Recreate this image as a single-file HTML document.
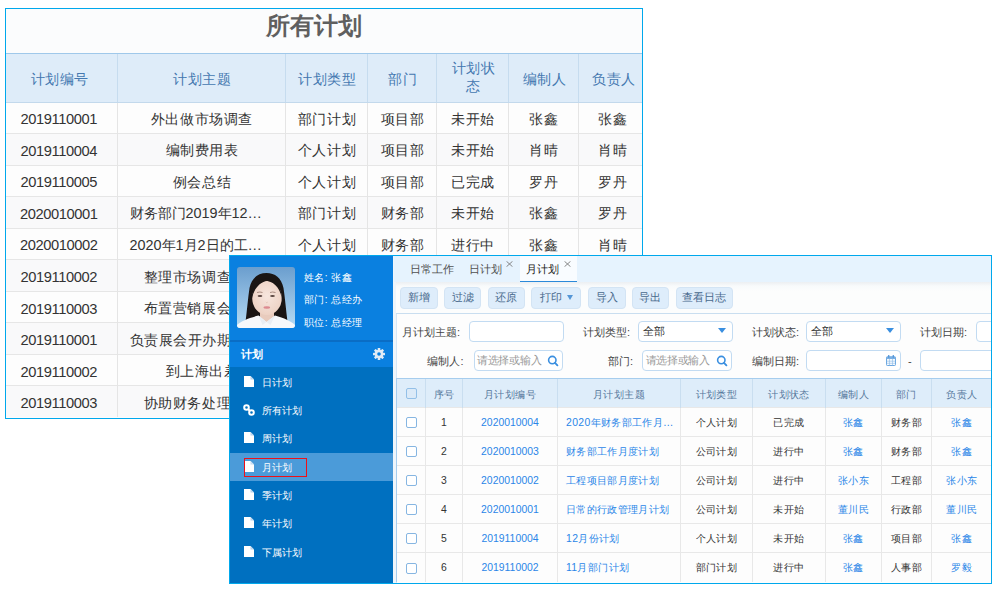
<!DOCTYPE html>
<html><head><meta charset="utf-8">
<style>
*{box-sizing:border-box;margin:0;padding:0}
html,body{width:1000px;height:600px;overflow:hidden;background:#fff;font-family:"Liberation Sans",sans-serif}
.abs{position:absolute}
/* back table */
#back{position:absolute;left:5px;top:8px;width:638px;height:411px;border:1px solid #00a8ec;background:#fbfcfd;overflow:hidden}
#back .title{position:absolute;left:0;top:0;width:616px;height:44px;line-height:34px;text-align:center;font-size:24.4px;font-weight:bold;color:#5f5f5f}
#back table{position:absolute;left:0;top:44px;width:636px;border-collapse:collapse;table-layout:fixed}
#back td,#back th{font-size:14.4px;text-align:center;white-space:nowrap;overflow:hidden;text-overflow:ellipsis;padding:0 11px;color:#333;font-weight:normal;border-left:1px solid #e5e5e5;border-top:1px solid #e6e6e6}
#back th{letter-spacing:.6px;background:#deecf9;color:#4478b0;border-left:1px solid #c6dcef;border-top:1px solid #9fc8ea;border-bottom:1px solid #c3d9ec;height:48.5px;line-height:16px;padding:2px 3.5px 0 6.5px}
#back th:first-child{padding:2px 7.5px 0 4.5px}
#back th:last-child{padding:2px 1px 0 8.5px}
#back td{height:31.55px;padding:3px 10px 0 12px;letter-spacing:.6px}
#back td:last-child{padding:3px 7px 0 12px}
#back td:first-child{padding:3px 13px 0 8px;letter-spacing:-.4px;font-size:14.7px}
#back tr>*:first-child{border-left:none}
#back tr:nth-child(even) td{background:#fdfdfd}
#back tr:nth-child(odd) td{background:#f9f9fa}

/* front panel */
#front{position:absolute;left:229px;top:255px;width:763px;height:329px;border:1px solid #00a8ec;background:#fdfdfd;overflow:hidden}
#front .a{position:absolute}
.side{left:0;top:0;width:163px;height:327px;background:#0070c0}
.prof{left:0;top:0;width:163px;height:85px;background:#0a80e0}
.pline{left:0;top:84px;width:163px;height:2px;background:#0a6dc5}
.phead{left:0;top:86px;width:163px;height:25px;background:#0a80e0}
.ptxt{color:#fff;font-size:10px;letter-spacing:.4px;line-height:14px;white-space:nowrap}
.mi{left:0;width:163px;height:28.2px;color:#fff;font-size:10px}
.mi .ic{position:absolute;left:14px;top:8px}
.mi span{position:absolute;left:32px;top:7px;line-height:16px}
.tabbar{left:164px;top:0;width:597px;height:26px;background:#e6f3fe}
.tab{top:0;height:26px;line-height:26px;font-size:11px;color:#505050;white-space:nowrap}
.x{font-size:11px;color:#888;line-height:10px}
.tb{left:166px;top:26px;width:595px;height:32px;background:linear-gradient(#eceff2,#f8fafb 4px,#fcfdfd 9px,#fcfdfd);border-bottom:1px solid #c9def0}
.btn{top:31px;height:21.5px;border:1px solid #d3e4f4;border-radius:4px;background:#deedfb;color:#48698c;font-size:10.8px;line-height:19.5px;text-align:center;white-space:nowrap}
.lbl{font-size:11px;color:#444;white-space:nowrap;line-height:14px;text-align:right}
.inp{height:21px;border:1px solid #c2dbf2;border-radius:4px;background:#fff;font-size:11px;color:#333;line-height:19.5px;padding-left:4px;white-space:nowrap;overflow:hidden}
.ph{color:#999;letter-spacing:-.3px}
#ft{position:absolute;left:166px;top:122px;border-collapse:collapse;table-layout:fixed;width:595px}
#ft td,#ft th{font-size:10.4px;letter-spacing:.35px;text-align:center;white-space:nowrap;overflow:hidden;text-overflow:ellipsis;color:#333;font-weight:normal;border-left:1px solid #e8e8e8;border-top:1px solid #e8e8e8;height:29px;padding:1px 5px 0}
#ft th{background:#deedfa;color:#56789c;border-left:1px solid #c9def0;border-top:1px solid #a6cdee;height:29px;padding-top:3px}
#ft th:first-child{padding-top:0}
#ft tr>*:first-child{border-left:1px solid #a6cdee}
#ft .l{color:#2a86e8}
#ft .n{letter-spacing:0}
.cb{display:inline-block;width:11px;height:11px;border:1px solid #86b6e2;border-radius:2px;background:#fff;vertical-align:middle}
</style></head><body>

<div id="back">
  <div class="title">所有计划</div>
  <table>
    <colgroup><col style="width:111px"><col style="width:168px"><col style="width:82px"><col style="width:69px"><col style="width:72px"><col style="width:70px"><col style="width:64px"></colgroup>
    <tr><th>计划编号</th><th>计划主题</th><th>计划类型</th><th>部门</th><th style="line-height:17.6px;padding-top:0">计划状<br>态</th><th>编制人</th><th>负责人</th></tr>
    <tr><td>2019110001</td><td>外出做市场调查</td><td>部门计划</td><td>项目部</td><td>未开始</td><td>张鑫</td><td>张鑫</td></tr>
    <tr><td>2019110004</td><td>编制费用表</td><td>个人计划</td><td>项目部</td><td>未开始</td><td>肖晴</td><td>肖晴</td></tr>
    <tr><td>2019110005</td><td>例会总结</td><td>个人计划</td><td>项目部</td><td>已完成</td><td>罗丹</td><td>罗丹</td></tr>
    <tr><td>2020010001</td><td style="text-align:left;letter-spacing:0;padding:3px 22px 0 12px">财务部门2019年12月份计划</td><td>部门计划</td><td>财务部</td><td>未开始</td><td>张鑫</td><td>罗丹</td></tr>
    <tr><td>2020010002</td><td style="text-align:left;letter-spacing:0;padding:3px 22px 0 12px">2020年1月2日的工作计划</td><td>个人计划</td><td>财务部</td><td>进行中</td><td>张鑫</td><td>肖晴</td></tr>
    <tr><td>2019110002</td><td>整理市场调查报告</td><td>个人计划</td><td>项目部</td><td>进行中</td><td>张鑫</td><td>张鑫</td></tr>
    <tr><td>2019110003</td><td>布置营销展会场地</td><td>部门计划</td><td>项目部</td><td>进行中</td><td>张鑫</td><td>张鑫</td></tr>
    <tr><td>2019110001</td><td>负责展会开办期间事务</td><td>部门计划</td><td>项目部</td><td>进行中</td><td>张鑫</td><td>张鑫</td></tr>
    <tr><td>2019110002</td><td>到上海出差</td><td>个人计划</td><td>项目部</td><td>进行中</td><td>张鑫</td><td>张鑫</td></tr>
    <tr><td>2019110003</td><td>协助财务处理账目</td><td>个人计划</td><td>项目部</td><td>进行中</td><td>张鑫</td><td>张鑫</td></tr>
  </table>
</div>


<div id="front">
  <div class="a side"></div>
  <div class="a prof"></div>
  <div class="a pline"></div>
  <div class="a phead"></div>
  <div class="a" style="left:7px;top:11px;width:58px;height:61px;border-radius:3px;overflow:hidden">
    <svg width="58" height="61" viewBox="0 0 58 61">
      <defs><linearGradient id="bg" x1="0" y1="0" x2="0" y2="1"><stop offset="0" stop-color="#6b9ece"/><stop offset="1" stop-color="#b6dbf4"/></linearGradient>
      <radialGradient id="sk" cx="0.5" cy="0.45" r="0.6"><stop offset="0" stop-color="#f7e6de"/><stop offset="1" stop-color="#ecd0c2"/></radialGradient></defs>
      <rect width="58" height="61" fill="url(#bg)"/>
      <path d="M8.5 55 C10 43 11 31 12.5 21 C14.5 11 21 6 29.5 6 C38 6 44.5 11 46.5 21 C48 31 49 43 50.5 55 Z" fill="#1a1514"/>
      <rect x="23" y="41" width="14" height="15" fill="#e8cbbd"/>
      <ellipse cx="30" cy="31" rx="14.8" ry="17" fill="url(#sk)"/>
      <path d="M14.8 33 C14.5 20 21 12 29.5 11.5 C38.5 12 45.2 20 45 33 C44 23 38.5 15.5 30 13.8 C22 15.5 16 23 14.8 33 Z" fill="#1a1514"/>
      <path d="M0 61 L0 58 C4 54 12 51 21.5 48.5 L29.5 55 L38 48.5 C47 51 54 54 58 58 L58 61 Z" fill="#f6f8fb"/>
      <path d="M21.5 48.5 L29.5 55 L25.5 58 Z M38 48.5 L29.5 55 L33.5 58 Z" fill="#e9eef4"/>
      <ellipse cx="23" cy="29" rx="2.4" ry="1.1" fill="#5a4640"/>
      <ellipse cx="35.5" cy="29" rx="2.4" ry="1.1" fill="#5a4640"/>
      <path d="M20 25.5 Q23 24.5 25.5 25.5 M33 25.5 Q35.5 24.5 38.5 25.5" stroke="#8a6a5e" stroke-width="0.7" fill="none"/>
      <ellipse cx="29.8" cy="40.5" rx="3.3" ry="1.2" fill="#dc8a90"/>
      <path d="M28.8 35 Q29.8 36.5 30.8 35" stroke="#dcb8a8" stroke-width="0.6" fill="none"/>
    </svg>
  </div>
  <div class="a ptxt" style="left:74px;top:14.5px">姓名: 张鑫</div>
  <div class="a ptxt" style="left:74px;top:37px">部门: 总经办</div>
  <div class="a ptxt" style="left:74px;top:59.5px">职位: 总经理</div>
  <div class="a" style="left:10.5px;top:91px;color:#fff;font-weight:bold;font-size:11px;line-height:14px">计划</div>
  <svg class="a" style="left:142.5px;top:92px" width="12" height="12" viewBox="0 0 12 12"><g fill="#e2ecf6"><circle cx="6" cy="6" r="4.3"/><g id="t"><rect x="4.7" y="0" width="2.6" height="12" rx="0.6"/></g><rect x="4.7" y="0" width="2.6" height="12" rx="0.6" transform="rotate(45 6 6)"/><rect x="4.7" y="0" width="2.6" height="12" rx="0.6" transform="rotate(90 6 6)"/><rect x="4.7" y="0" width="2.6" height="12" rx="0.6" transform="rotate(135 6 6)"/></g><circle cx="6" cy="6" r="1.8" fill="#0a80e0"/></svg>
  <div class="a mi" style="top:112px"><svg class="ic" width="10" height="11" viewBox="0 0 10 11"><path d="M0 0H6.5L10 3.5V11H0Z" fill="#fff"/><path d="M6.5 0V3.5H10" fill="#b8d4ee"/></svg><span>日计划</span></div>
  <div class="a mi" style="top:140.2px"><svg class="ic" width="12" height="12" viewBox="0 0 12 12" style="left:13px;top:8px"><g fill="none" stroke="#fff" stroke-width="2"><circle cx="3.5" cy="3.5" r="2.3"/><circle cx="8.5" cy="8.5" r="2.3"/><path d="M5 5L7 7"/></g></svg><span>所有计划</span></div>
  <div class="a mi" style="top:168.4px"><svg class="ic" width="10" height="11" viewBox="0 0 10 11"><path d="M0 0H6.5L10 3.5V11H0Z" fill="#fff"/><path d="M6.5 0V3.5H10" fill="#b8d4ee"/></svg><span>周计划</span></div>
  <div class="a mi" style="top:196.8px;height:28px;background:#4b9bd9"><svg class="ic" width="10" height="11" viewBox="0 0 10 11"><path d="M0 0H6.5L10 3.5V11H0Z" fill="#fff"/><path d="M6.5 0V3.5H10" fill="#c8def2"/></svg><span>月计划</span></div>
  <div class="a" style="left:14px;top:202px;width:63px;height:19px;border:1.6px solid #ee1018"></div>
  <div class="a mi" style="top:225.2px"><svg class="ic" width="10" height="11" viewBox="0 0 10 11"><path d="M0 0H6.5L10 3.5V11H0Z" fill="#fff"/><path d="M6.5 0V3.5H10" fill="#b8d4ee"/></svg><span>季计划</span></div>
  <div class="a mi" style="top:253.4px"><svg class="ic" width="10" height="11" viewBox="0 0 10 11"><path d="M0 0H6.5L10 3.5V11H0Z" fill="#fff"/><path d="M6.5 0V3.5H10" fill="#b8d4ee"/></svg><span>年计划</span></div>
  <div class="a mi" style="top:281.6px"><svg class="ic" width="10" height="11" viewBox="0 0 10 11"><path d="M0 0H6.5L10 3.5V11H0Z" fill="#fff"/><path d="M6.5 0V3.5H10" fill="#b8d4ee"/></svg><span>下属计划</span></div>

  <div class="a" style="left:163px;top:0;width:3px;height:327px;background:#eef5fb"></div>
  <div class="a" style="left:166px;top:58px;width:1px;height:269px;background:#d6e7f6"></div>
  <div class="a tabbar"></div>
  <div class="a" style="left:290px;top:0;width:56.5px;height:26.5px;background:#f9fcff;border-bottom:2px solid #2b89d9"></div>
  <div class="a tab" style="left:180px">日常工作</div>
  <div class="a tab" style="left:238.5px">日计划</div>
  <div class="a x" style="left:276px;top:4.5px"><svg width="7" height="6" viewBox="0 0 7 6" style="display:block"><path d="M0.5 0.3L6.5 5.7M6.5 0.3L0.5 5.7" stroke="#7a7a7a" stroke-width="0.9"/></svg></div>
  <div class="a tab" style="left:296px;color:#222">月计划</div>
  <div class="a x" style="left:333.5px;top:4.5px"><svg width="7" height="6" viewBox="0 0 7 6" style="display:block"><path d="M0.5 0.3L6.5 5.7M6.5 0.3L0.5 5.7" stroke="#7a7a7a" stroke-width="0.9"/></svg></div>

  <div class="a tb"></div>
  <div class="a btn" style="left:169.5px;width:38px">新增</div>
  <div class="a btn" style="left:214px;width:37px">过滤</div>
  <div class="a btn" style="left:257.5px;width:37px">还原</div>
  <div class="a btn" style="left:301px;width:49.5px;text-align:left;padding-left:7.5px">打印<span style="display:inline-block;width:0;height:0;border-left:3.7px solid transparent;border-right:3.7px solid transparent;border-top:5px solid #5596d6;vertical-align:1.5px;margin-left:5.5px"></span></div>
  <div class="a btn" style="left:357.5px;width:38px">导入</div>
  <div class="a btn" style="left:401.5px;width:37.5px">导出</div>
  <div class="a btn" style="left:445.5px;width:57.5px">查看日志</div>

  <div class="a lbl" style="left:150px;width:80px;top:69px">月计划主题:</div>
  <div class="a inp" style="left:239px;top:64.5px;width:95px"></div>
  <div class="a lbl" style="left:153.5px;width:80px;top:98px">编制人:</div>
  <div class="a inp ph" style="left:243.5px;top:94px;width:89.5px;padding-left:2.5px">请选择或输入<svg style="position:absolute;right:3.5px;top:3.5px" width="12" height="12" viewBox="0 0 12 12"><circle cx="5.3" cy="5.1" r="3.7" fill="none" stroke="#3a8fe0" stroke-width="1.6"/><path d="M8 7.9L10.4 10.3" stroke="#3a8fe0" stroke-width="1.9" stroke-linecap="round"/></svg></div>

  <div class="a lbl" style="left:320px;width:80px;top:69px">计划类型:</div>
  <div class="a inp" style="left:408px;top:64.5px;width:95px">全部<span style="position:absolute;right:6px;top:6.5px;width:0;height:0;border-left:4px solid transparent;border-right:4px solid transparent;border-top:5px solid #3a8fe0"></span></div>
  <div class="a lbl" style="left:323px;width:80px;top:98px">部门:</div>
  <div class="a inp ph" style="left:412px;top:94px;width:90px;padding-left:2.5px">请选择或输入<svg style="position:absolute;right:3.5px;top:3.5px" width="12" height="12" viewBox="0 0 12 12"><circle cx="5.3" cy="5.1" r="3.7" fill="none" stroke="#3a8fe0" stroke-width="1.6"/><path d="M8 7.9L10.4 10.3" stroke="#3a8fe0" stroke-width="1.9" stroke-linecap="round"/></svg></div>

  <div class="a lbl" style="left:489px;width:80px;top:69px">计划状态:</div>
  <div class="a inp" style="left:576px;top:64.5px;width:95px">全部<span style="position:absolute;right:6px;top:6.5px;width:0;height:0;border-left:4px solid transparent;border-right:4px solid transparent;border-top:5px solid #3a8fe0"></span></div>
  <div class="a lbl" style="left:489px;width:80px;top:98px">编制日期:</div>
  <div class="a inp" style="left:576px;top:94px;width:95px"><svg style="position:absolute;right:4px;top:3.5px" width="10" height="11" viewBox="0 0 10 11"><rect x="0.5" y="1.8" width="9" height="8.7" rx="0.8" fill="#f4f9fe" stroke="#6aa6e0" stroke-width="1"/><rect x="0.5" y="1.8" width="9" height="2.2" fill="#7ab0e4"/><g stroke="#8dbce8" stroke-width="0.6"><path d="M3.5 4V10.5M6.5 4V10.5M0.5 6.2H9.5M0.5 8.3H9.5"/></g><rect x="2" y="0" width="1.4" height="2.8" rx="0.5" fill="#5596d8"/><rect x="6.6" y="0" width="1.4" height="2.8" rx="0.5" fill="#5596d8"/></svg></div>
  <div class="a lbl" style="left:678px;top:98px;text-align:left">-</div>
  <div class="a lbl" style="left:657px;width:80px;top:69px">计划日期:</div>
  <div class="a inp" style="left:745.5px;top:64.5px;width:40px"></div>
  <div class="a inp" style="left:690px;top:94px;width:95px"></div>

  <table id="ft">
    <colgroup><col style="width:29px"><col style="width:37px"><col style="width:95px"><col style="width:123px"><col style="width:72px"><col style="width:73px"><col style="width:56px"><col style="width:50px"><col style="width:60px"></colgroup>
    <tr><th><span class="cb" style="background:#dbeaf8;border-color:#93c0e8"></span></th><th>序号</th><th>月计划编号</th><th>月计划主题</th><th>计划类型</th><th>计划状态</th><th>编制人</th><th>部门</th><th>负责人</th></tr>
    <tr><td><span class="cb"></span></td><td>1</td><td class="l n">2020010004</td><td class="l" style="text-align:left;padding-left:8px">2020年财务部工作月度计划</td><td>个人计划</td><td>已完成</td><td class="l">张鑫</td><td>财务部</td><td class="l">张鑫</td></tr>
    <tr><td><span class="cb"></span></td><td>2</td><td class="l n">2020010003</td><td class="l" style="text-align:left;padding-left:8px">财务部工作月度计划</td><td>公司计划</td><td>进行中</td><td class="l">张鑫</td><td>财务部</td><td class="l">张鑫</td></tr>
    <tr><td><span class="cb"></span></td><td>3</td><td class="l n">2020010002</td><td class="l" style="text-align:left;padding-left:8px">工程项目部月度计划</td><td>公司计划</td><td>进行中</td><td class="l">张小东</td><td>工程部</td><td class="l">张小东</td></tr>
    <tr><td><span class="cb"></span></td><td>4</td><td class="l n">2020010001</td><td class="l" style="text-align:left;padding-left:8px">日常的行政管理月计划</td><td>公司计划</td><td>未开始</td><td class="l">董川民</td><td>行政部</td><td class="l">董川民</td></tr>
    <tr><td><span class="cb"></span></td><td>5</td><td class="l n">2019110004</td><td class="l" style="text-align:left;padding-left:8px">12月份计划</td><td>个人计划</td><td>未开始</td><td class="l">张鑫</td><td>项目部</td><td class="l">张鑫</td></tr>
    <tr><td><span class="cb"></span></td><td>6</td><td class="l n">2019110002</td><td class="l" style="text-align:left;padding-left:8px">11月部门计划</td><td>部门计划</td><td>进行中</td><td class="l">张鑫</td><td>人事部</td><td class="l">罗毅</td></tr>
  </table>
</div>
</body></html>
